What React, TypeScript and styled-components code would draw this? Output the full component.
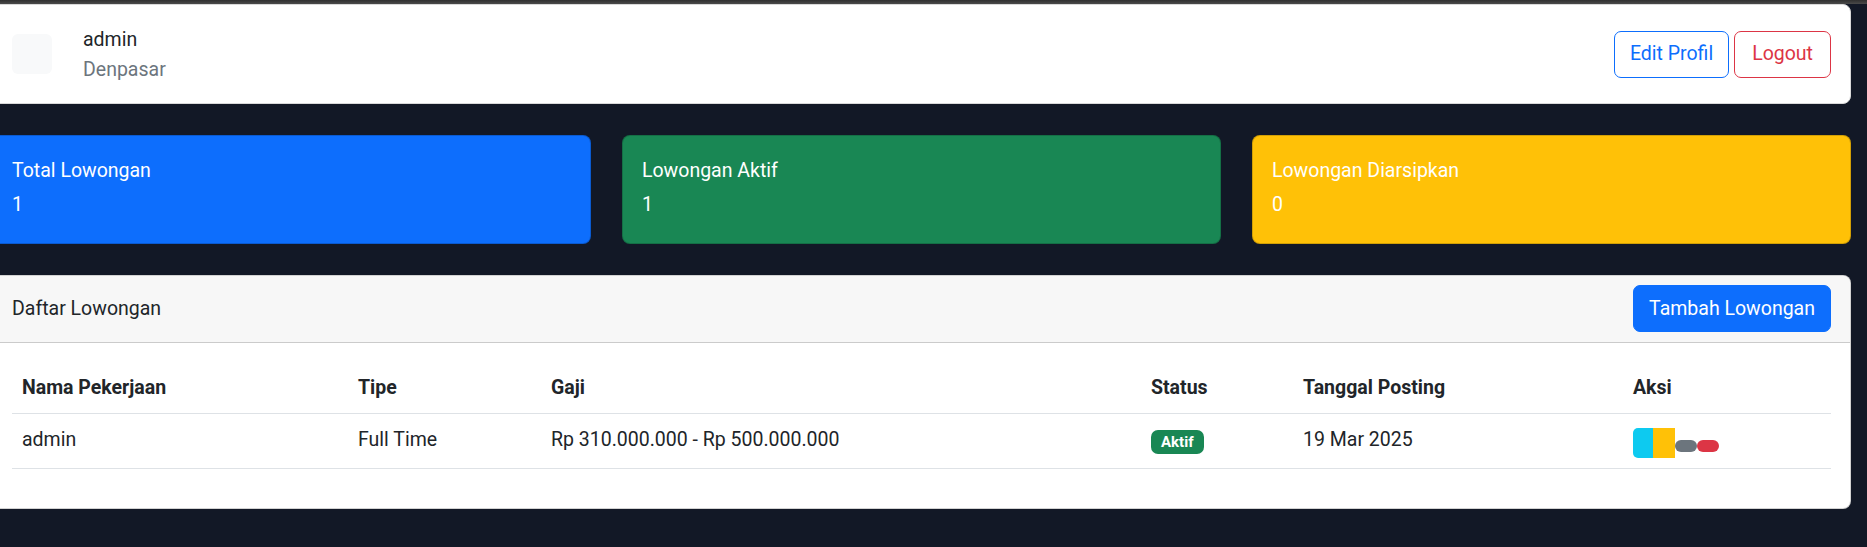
import React from "react";
import styled, { createGlobalStyle } from "styled-components";

const GlobalStyle = createGlobalStyle`
  html, body {
    margin: 0;
    padding: 0;
    background: #121826;
    overflow: hidden;
  }
  body {
    font-family: "Segoe UI", Roboto, "Liberation Sans", sans-serif;
    font-size: 19.5px;
    line-height: 30px;
    color: #212529;
  }
  * { box-sizing: border-box; }
`;

const TopStrip = styled.div`
  height: 4px;
  background: linear-gradient(#2f2f2f, #4a4a4a);
`;

const Content = styled.main`
  margin-left: -8px;
  width: 1859px;
  display: flex;
  flex-direction: column;
  gap: 31px;
`;

const Card = styled.section`
  background: #ffffff;
  border: 1px solid rgba(0, 0, 0, 0.175);
  border-radius: 8px;
  overflow: hidden;
`;

const ProfileCard = styled(Card)`
  height: 100px;
  padding: 19px;
  display: flex;
  align-items: center;
  justify-content: space-between;
  border-color: #d9d9d9;
`;

const ProfileInfo = styled.div`
  display: flex;
  align-items: center;
`;

const Avatar = styled.div`
  width: 40px;
  height: 40px;
  border-radius: 6px;
  background: #f8f9fa;
  margin-right: 31px;
`;

const NameBlock = styled.div`
  display: flex;
  flex-direction: column;
  padding-top: 1px;
`;

const Name = styled.span`
  color: #212529;
`;

const City = styled.span`
  color: #6c757d;
`;

const ButtonRow = styled.div`
  display: flex;
  gap: 5px;
`;

const OutlineButton = styled.button<{ $color: string; $padX: number }>`
  font: inherit;
  height: 47px;
  padding: 0 ${(p) => p.$padX}px;
  border-radius: 7px;
  background: transparent;
  color: ${(p) => p.$color};
  border: 1px solid ${(p) => p.$color};
  cursor: pointer;
`;

const StatRow = styled.div`
  display: grid;
  grid-template-columns: repeat(3, 599px);
  column-gap: 31px;
`;

const StatCard = styled.div<{ $bg: string }>`
  height: 109px;
  padding: 20px 19px 19px;
  border-radius: 8px;
  border: 1px solid rgba(0, 0, 0, 0.175);
  background: ${(p) => p.$bg};
  color: #ffffff;
`;

const StatTitle = styled.div`
  margin-bottom: 4px;
`;

const StatValue = styled.div``;

const CardHeader = styled.header`
  background: #f7f7f7;
  border-bottom: 1px solid rgba(0, 0, 0, 0.175);
  padding: 9px 19px 10px;
  display: flex;
  align-items: center;
  justify-content: space-between;
`;

const PrimaryButton = styled.button`
  font: inherit;
  height: 47px;
  padding: 0 15px;
  border-radius: 7px;
  background: #0d6efd;
  color: #ffffff;
  border: 1px solid #0d6efd;
  cursor: pointer;
`;

const CardBody = styled.div`
  padding: 19px 19px 19px;
`;

const Table = styled.table`
  width: 1819px;
  table-layout: fixed;
  border-collapse: collapse;
  margin-bottom: 20px;
`;

const Th = styled.th<{ $w: number }>`
  width: ${(p) => p.$w}px;
  text-align: left;
  font-weight: 700;
  padding: 11px 10px 10px;
  vertical-align: top;
  border-bottom: 1px solid #dee2e6;
`;

const Td = styled.td`
  padding: 11px 10px 10px;
  vertical-align: top;
  border-bottom: 1px solid #dee2e6;
`;

const Badge = styled.span`
  display: inline-block;
  margin-top: 5px;
  height: 24px;
  line-height: 24px;
  padding: 0 10px;
  border-radius: 7px;
  background: #198754;
  color: #ffffff;
  font-size: 15px;
  font-weight: 700;
`;

const ActionGroup = styled.div`
  display: flex;
  height: 33px;
  align-items: flex-end;
`;

const BlockButton = styled.span<{ $bg: string; $w: number; $first?: boolean }>`
  display: block;
  width: ${(p) => p.$w}px;
  height: 30px;
  background: ${(p) => p.$bg};
  border-radius: ${(p) => (p.$first ? "5px 0 0 5px" : "0")};
`;

const PillButton = styled.span<{ $bg: string }>`
  display: block;
  width: 22px;
  height: 12px;
  margin-bottom: 6px;
  background: ${(p) => p.$bg};
  border-radius: 6px;
`;

const columns = [
  { label: "Nama Pekerjaan", w: 336 },
  { label: "Tipe", w: 193 },
  { label: "Gaji", w: 600 },
  { label: "Status", w: 152 },
  { label: "Tanggal Posting", w: 330 },
  { label: "Aksi", w: 208 },
];

const stats = [
  { title: "Total Lowongan", value: "1", bg: "#0d6efd" },
  { title: "Lowongan Aktif", value: "1", bg: "#198754" },
  { title: "Lowongan Diarsipkan", value: "0", bg: "#ffc107" },
];

export default function App() {
  return (
    <>
      <GlobalStyle />
      <TopStrip />
      <Content>
        <ProfileCard>
          <ProfileInfo>
            <Avatar />
            <NameBlock>
              <Name>admin</Name>
              <City>Denpasar</City>
            </NameBlock>
          </ProfileInfo>
          <ButtonRow>
            <OutlineButton $color="#0d6efd" $padX={15}>
              Edit Profil
            </OutlineButton>
            <OutlineButton $color="#dc3545" $padX={17}>
              Logout
            </OutlineButton>
          </ButtonRow>
        </ProfileCard>

        <StatRow>
          {stats.map((s) => (
            <StatCard key={s.title} $bg={s.bg}>
              <StatTitle>{s.title}</StatTitle>
              <StatValue>{s.value}</StatValue>
            </StatCard>
          ))}
        </StatRow>

        <Card>
          <CardHeader>
            <span>Daftar Lowongan</span>
            <PrimaryButton>Tambah Lowongan</PrimaryButton>
          </CardHeader>
          <CardBody>
            <Table>
              <thead>
                <tr>
                  {columns.map((c) => (
                    <Th key={c.label} $w={c.w}>
                      {c.label}
                    </Th>
                  ))}
                </tr>
              </thead>
              <tbody>
                <tr>
                  <Td>admin</Td>
                  <Td>Full Time</Td>
                  <Td>Rp 310.000.000 - Rp 500.000.000</Td>
                  <Td>
                    <Badge>Aktif</Badge>
                  </Td>
                  <Td>19 Mar 2025</Td>
                  <Td>
                    <ActionGroup>
                      <BlockButton $bg="#0dcaf0" $w={20} $first />
                      <BlockButton $bg="#ffc107" $w={22} />
                      <PillButton $bg="#6c757d" />
                      <PillButton $bg="#dc3545" />
                    </ActionGroup>
                  </Td>
                </tr>
              </tbody>
            </Table>
          </CardBody>
        </Card>
      </Content>
    </>
  );
}
